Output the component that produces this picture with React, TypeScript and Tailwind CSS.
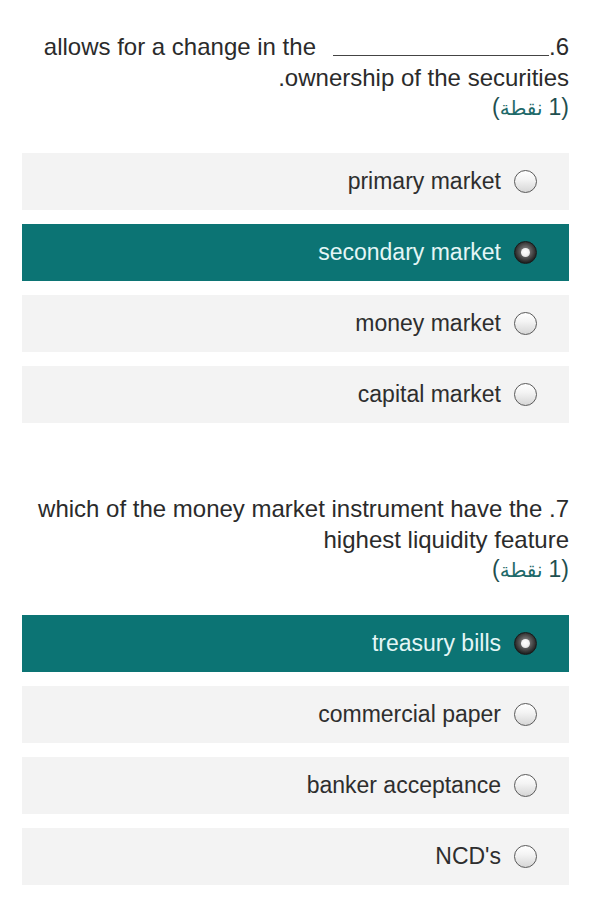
import React from "react";

type Opt = { label: string; selected?: boolean };

function Radio({ selected }: { selected?: boolean }) {
  if (selected) {
    return (
      <span className="relative inline-flex h-[23px] w-[23px] shrink-0 items-center justify-center rounded-full border border-[#1a1a1a] bg-[radial-gradient(circle_at_50%_45%,#9a9a9a_0%,#555_40%,#1c1c1c_75%,#0d0d0d_100%)]">
        <span className="h-[9px] w-[9px] rounded-full bg-[radial-gradient(circle_at_45%_40%,#ffffff_0%,#f2f2f2_50%,#c8c8c8_100%)]" />
      </span>
    );
  }
  return (
    <span className="inline-block h-[23px] w-[23px] shrink-0 rounded-full border-[1.5px] border-[#5a5a5a] bg-[linear-gradient(180deg,#ffffff_0%,#f4f4f4_40%,#d6d6d6_100%)]" />
  );
}

function Option({ label, selected }: Opt) {
  return (
    <div
      className={
        selected
          ? "flex h-[57px] items-center justify-end gap-[13px] bg-[#0c7474] pr-[32px]"
          : "flex h-[57px] items-center justify-end gap-[13px] bg-[#f3f3f3] pr-[32px]"
      }
    >
      <span
        className={
          selected
            ? "text-[23px] leading-none text-[#e4f6f6]"
            : "text-[23px] leading-none text-[#2e2e2e]"
        }
      >
        {label}
      </span>
      <Radio selected={selected} />
    </div>
  );
}

function Points() {
  return (
    <div className="flex h-[29px] items-center justify-end">
      <span className="flex flex-row items-baseline leading-none" dir="ltr">
        <span className="text-[23px] text-[#1f4f4f]">(</span>
        <span
          className="text-[20px] text-[#1f6a6a]"
          dir="rtl"
          style={{ fontFamily: '"DejaVu Sans", "Noto Sans", sans-serif' }}
        >
          {"\u0646\u0642\u0637\u0629"}
        </span>
        <span className="w-[6px]" />
        <span className="text-[23px] text-[#1f4f4f]">1)</span>
      </span>
    </div>
  );
}

function Question({
  lines,
  options,
}: {
  lines: React.ReactNode[];
  options: Opt[];
}) {
  return (
    <div>
      <div className="text-right text-[24px] leading-[31px] text-[#2b2b2b]">
        {lines.map((l, i) => (
          <div key={i}>{l}</div>
        ))}
      </div>
      <Points />
      <div className="mt-[31px] flex flex-col gap-[14px]">
        {options.map((o) => (
          <Option key={o.label} {...o} />
        ))}
      </div>
    </div>
  );
}

export default function App() {
  return (
    <div
      className="min-h-[922px] w-[591px] bg-white px-[22px] pt-[31px]"
      style={{ fontFamily: '"Liberation Sans", Arial, sans-serif' }}
    >
      <Question
        lines={[
          <span key="a">
            allows for a change in the
            <span className="ml-[17px] inline-block w-[216px] translate-y-[1px] border-b-[1.5px] border-[#444] align-baseline" />
            .6
          </span>,
          ".ownership of the securities",
        ]}
        options={[
          { label: "primary market" },
          { label: "secondary market", selected: true },
          { label: "money market" },
          { label: "capital market" },
        ]}
      />
      <div className="h-[70px]" />
      <Question
        lines={["which of the money market instrument have the .7", "highest liquidity feature"]}
        options={[
          { label: "treasury bills", selected: true },
          { label: "commercial paper" },
          { label: "banker acceptance" },
          { label: "NCD's" },
        ]}
      />
    </div>
  );
}
